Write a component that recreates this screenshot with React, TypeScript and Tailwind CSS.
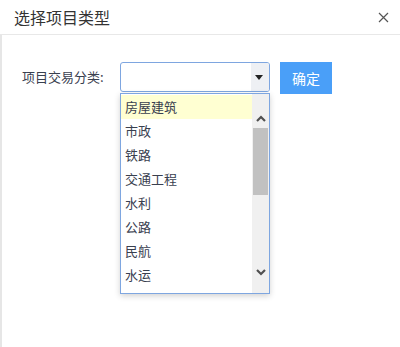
import React from "react";

const items = ["房屋建筑", "市政", "铁路", "交通工程", "水利", "公路", "民航", "水运"];

function Chevron({ up }: { up?: boolean }) {
  return (
    <svg width="10" height="7" viewBox="0 0 10 7">
      <path
        d={up ? "M1 6 L5 2 L9 6" : "M1 1 L5 5 L9 1"}
        fill="none"
        stroke="#505050"
        strokeWidth="2.2"
      />
    </svg>
  );
}

export default function App() {
  return (
    <div
      className="relative w-[400px] h-[347px] bg-white overflow-hidden"
      style={{ fontFamily: '"Noto Sans CJK SC", "Noto Sans", sans-serif' }}
    >
      <div className="flex items-center justify-between h-[35px] border-b border-[#e8e8e8] pl-[14px] pr-[11px]">
        <span className="text-[16px] text-[#333] leading-none">选择项目类型</span>
        <svg width="11" height="11" viewBox="0 0 11 11">
          <path d="M1 1 L10 10 M10 1 L1 10" stroke="#555" strokeWidth="1.2" />
        </svg>
      </div>
      <div className="h-[312px] border-l-2 border-[#e6e6e6]">
        <div className="flex items-start pt-[27px] pl-[20px]">
          <div className="w-[98px] h-[30px] flex items-center text-[13px] text-[#39404f]">
            项目交易分类:
          </div>
          <div className="w-[150px] h-[30px] rounded-[3px] border border-[#7ea6e0] flex overflow-hidden bg-white">
            <div className="flex-1" />
            <div className="w-[18px] bg-[#eef0f4] flex items-center justify-center pr-[2px]">
              <svg width="8" height="5" viewBox="0 0 8 5">
                <path d="M0 0 L8 0 L4 5 Z" fill="#222" />
              </svg>
            </div>
          </div>
          <button className="ml-[10px] w-[52px] h-[32px] bg-[#4a9ff8] text-white text-[14px] flex items-center justify-center">
            确定
          </button>
        </div>
      </div>

      <div className="absolute left-[120px] top-[93px] w-[150px] h-[201px] border border-[#7ea6e0] bg-white flex shadow-[0_2px_6px_rgba(0,0,0,0.18)]">
        <div className="w-[131px] flex flex-col pt-[1px]">
          {items.map((t, i) => (
            <div
              key={t}
              className={`h-[24px] flex items-center pl-[4px] text-[13px] text-[#39404f] ${
                i === 0 ? "bg-[#ffffd2]" : ""
              }`}
            >
              {t}
            </div>
          ))}
        </div>
        <div className="w-[17px] bg-[#f0f0f0] flex flex-col items-center">
          <div className="h-[15px]" />
          <div className="h-[18px] flex items-center justify-center">
            <Chevron up />
          </div>
          <div className="h-[1px]" />
          <div className="w-[15px] h-[67px] bg-[#c1c1c1]" />
          <div className="h-[68px]" />
          <div className="h-[18px] flex items-center justify-center">
            <Chevron />
          </div>
        </div>
      </div>
    </div>
  );
}
